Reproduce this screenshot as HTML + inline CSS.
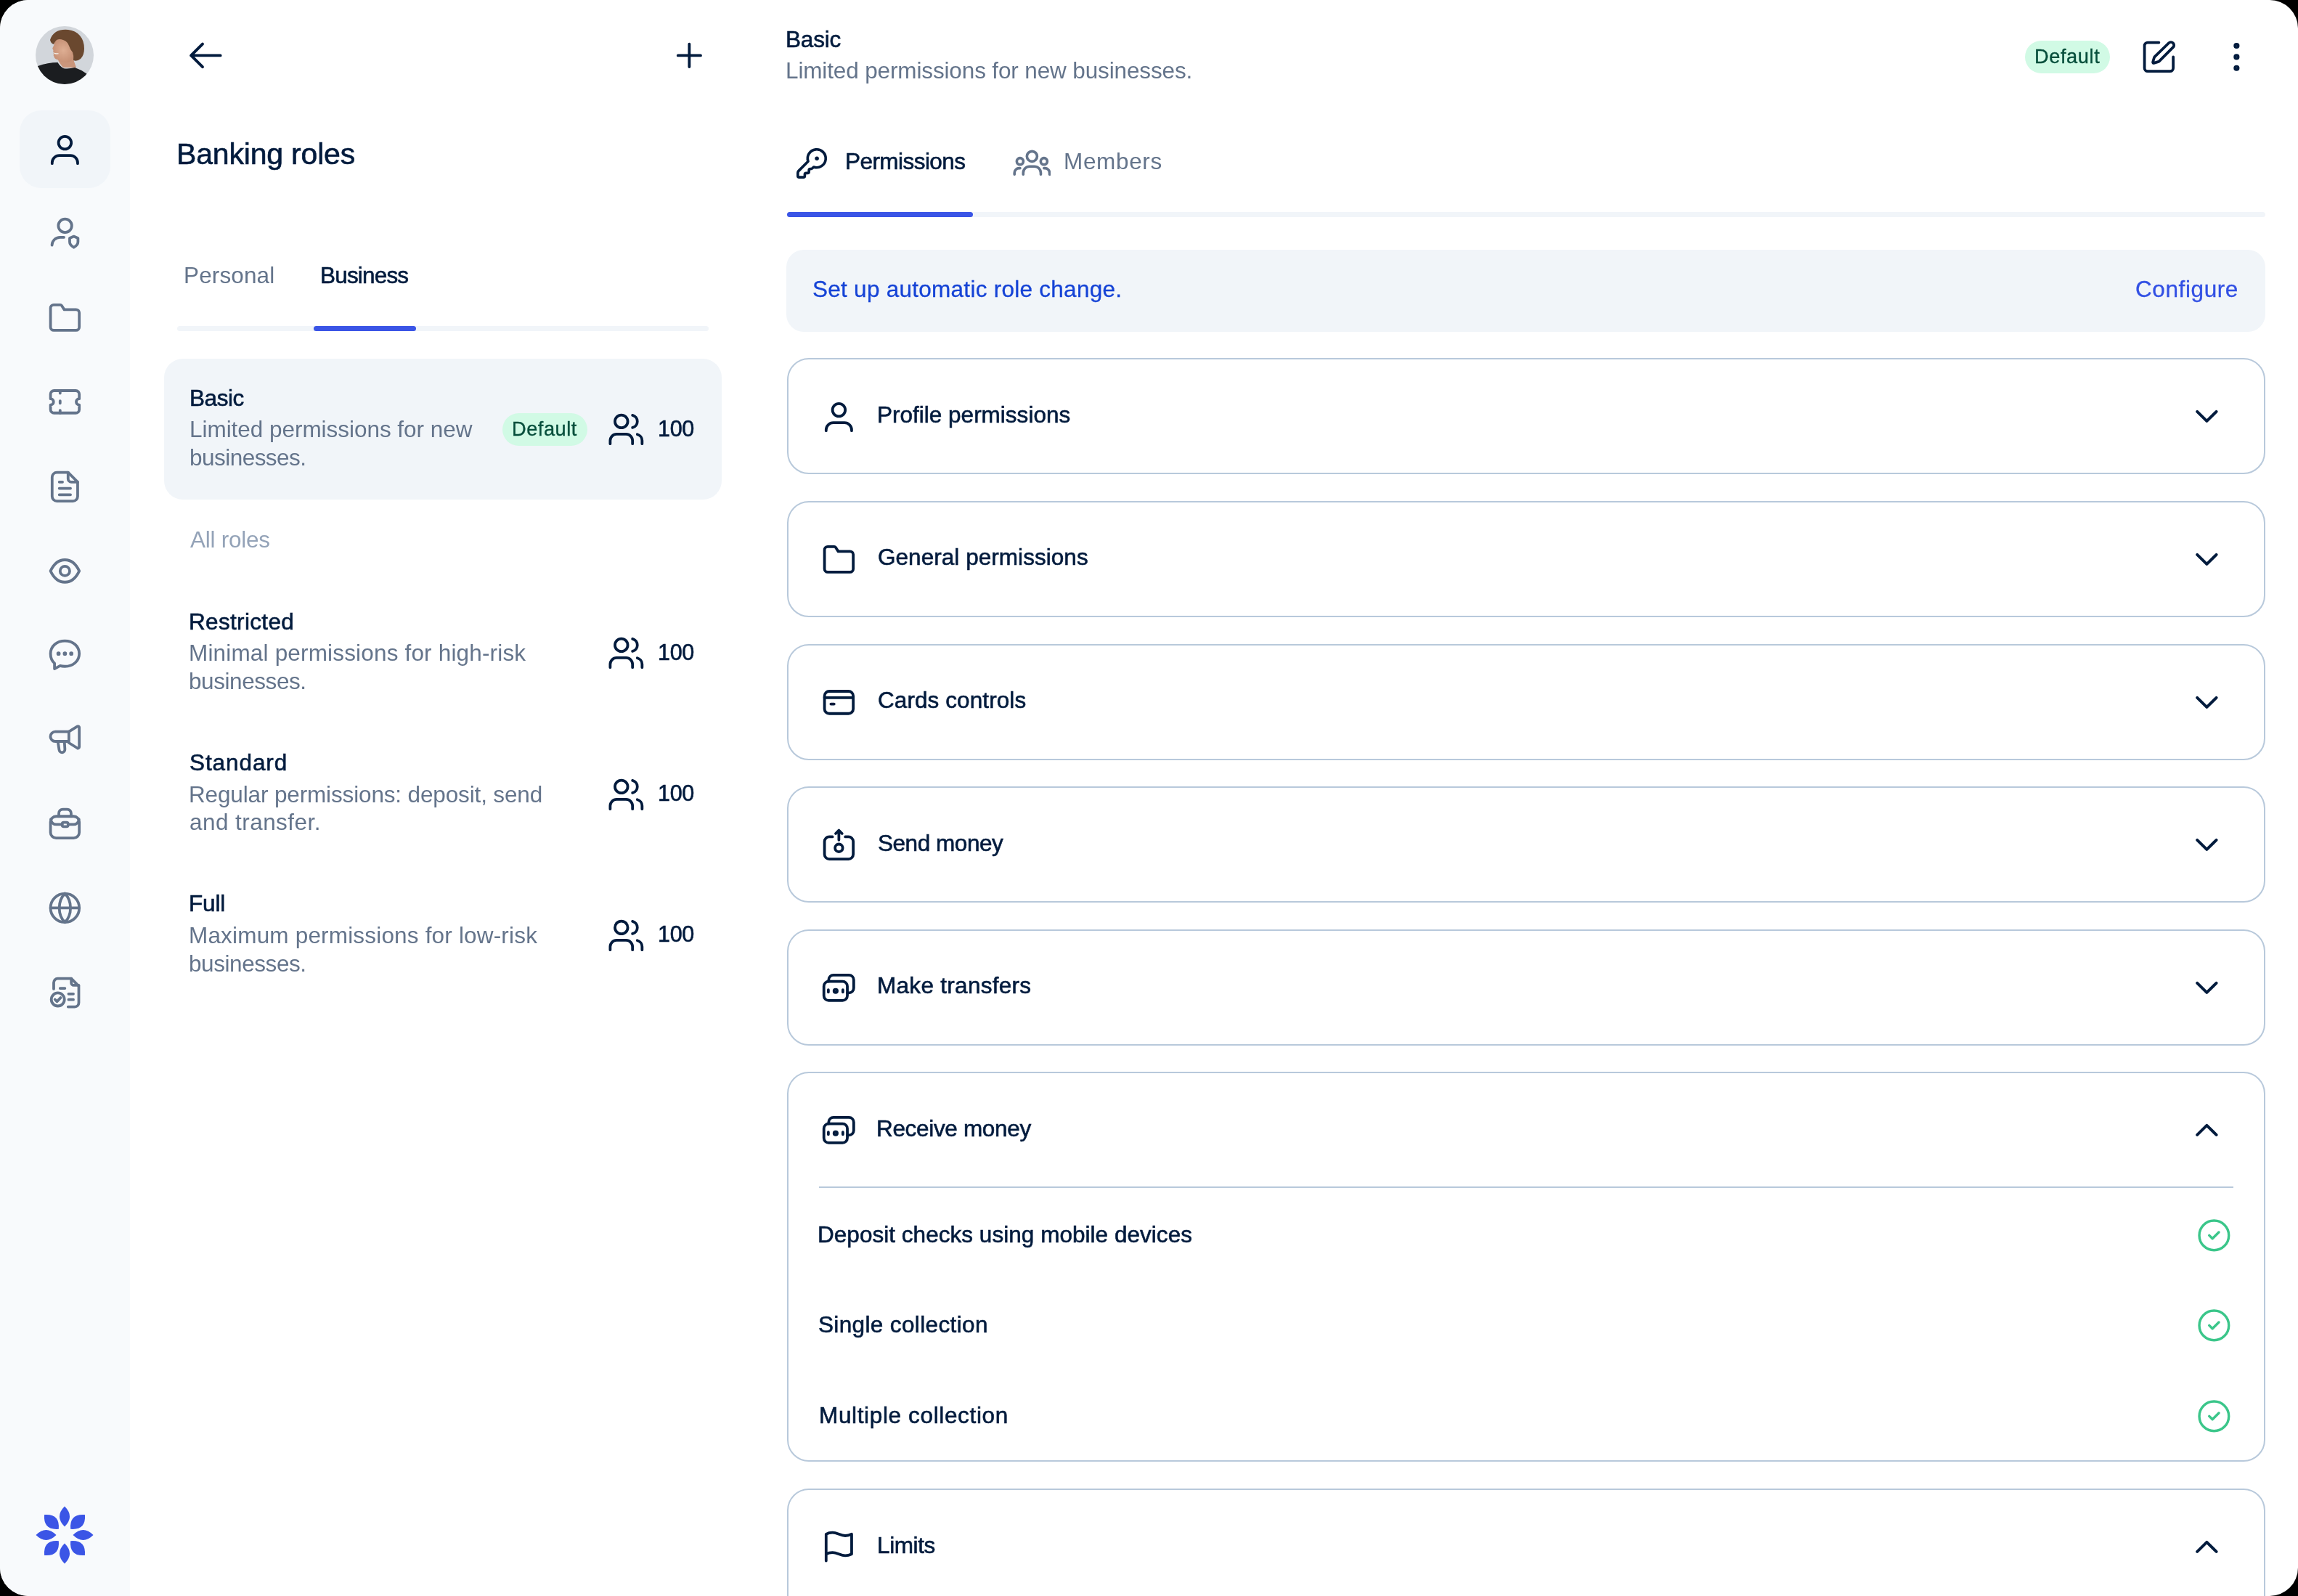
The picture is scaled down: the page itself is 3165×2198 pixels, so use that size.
<!DOCTYPE html>
<html><head><meta charset="utf-8"><style>
html,body{margin:0;padding:0;background:#000;}
body{width:3165px;height:2198px;overflow:hidden;position:relative;}
#app{position:absolute;left:0;top:0;width:3165px;height:2198px;background:#fff;border-radius:39px;overflow:hidden;font-family:"Liberation Sans",sans-serif;}
.t{position:absolute;white-space:nowrap;line-height:1;will-change:transform;}
.med{-webkit-text-stroke:0.6px currentColor;}
svg{display:block;}
</style></head><body><div id="app">
<div style="position:absolute;left:0.0px;top:0.0px;width:179.0px;height:2198.0px;background:#f8fafc;"></div>
<svg style="position:absolute;left:49.2px;top:35.9px" width="80" height="80" viewBox="0 0 80 80">
<defs><clipPath id="av"><circle cx="40" cy="40" r="40"/></clipPath>
<radialGradient id="sk" cx="0.5" cy="0.5" r="0.6"><stop offset="0" stop-color="#deae93"/><stop offset="1" stop-color="#c28b70"/></radialGradient></defs>
<g clip-path="url(#av)">
<rect width="80" height="80" fill="#d2d6db"/>
<path d="M30 44 Q33 52 38 57 L56 57 Q52 48 51 38 Z" fill="#c9957b"/>
<path d="M28 18 Q40 14 50 22 Q55 32 53 42 Q51 48 44 50 Q36 50 30 46 Q26 45 25.5 42 Q24 40 25 38.5 Q24 37.5 25 36.5 Q23.5 35 24.5 33 Q22.5 31 23.5 30 Q26 26 26 22 Z" fill="url(#sk)"/>
<path d="M25.5 37.2 Q28.5 38.4 31.5 37.6" stroke="#f2ebe4" stroke-width="1.5" fill="none"/>
<path d="M20 19 Q22 12 28 8 Q35 4 45 5 Q55 6 61 13 Q67 20 67 31 Q67 40 62 45 Q57 49 52 47 Q53 41 51 36 Q48 33 46 27 Q44 21 38 19 Q33 17 29 19 Q26 22 25 25 Q21 24 20 19 Z" fill="#6a482f"/>
<path d="M3 55 Q17 50 30.5 50 Q34 56 39 58.3 Q47 59 54 57 Q63 60 71 66 L80 80 L0 80 Z" fill="#1b1d20"/>
</g></svg>
<div style="position:absolute;left:27.0px;top:151.7px;width:125.0px;height:107.6px;background:#f1f5f9;border-radius:30px;"></div>
<svg style="position:absolute;left:62.83px;top:178.93px" width="52.75" height="52.75" viewBox="0 0 24 24" fill="none" stroke="#021b3d" stroke-width="1.72" stroke-linecap="round" stroke-linejoin="round"><circle cx="12" cy="8" r="4"/><path d="M4 21v-.5A4.5 4.5 0 0 1 8.5 16h7a4.5 4.5 0 0 1 4.5 4.5v.5"/></svg>
<svg style="position:absolute;left:62.83px;top:295.08px" width="52.75" height="52.75" viewBox="0 0 24 24" fill="none" stroke="#64748b" stroke-width="1.72" stroke-linecap="round" stroke-linejoin="round"><circle cx="12.1" cy="7.2" r="4.2"/><path d="M3.9 19.4A5 5 0 0 1 8.9 14.5h2.5"/><path d="M17.6 13.9l2.6 1.1v2.4c0 1.4-1.1 2.5-2.6 3.4-1.5-.9-2.6-2-2.6-3.4V15z"/></svg>
<svg style="position:absolute;left:62.83px;top:411.23px" width="52.75" height="52.75" viewBox="0 0 24 24" fill="none" stroke="#64748b" stroke-width="1.72" stroke-linecap="round" stroke-linejoin="round"><path d="M3 18V6a2 2 0 0 1 2-2h4.1a1 1 0 0 1 .85.47L11.6 7H19a2 2 0 0 1 2 2v9a2 2 0 0 1-2 2H5a2 2 0 0 1-2-2z"/></svg>
<svg style="position:absolute;left:62.83px;top:527.38px" width="52.75" height="52.75" viewBox="0 0 24 24" fill="none" stroke="#64748b" stroke-width="1.72" stroke-linecap="round" stroke-linejoin="round"><path d="M3 7.2a2.2 2.2 0 0 1 2.2-2.2h13.6a2.2 2.2 0 0 1 2.2 2.2v2.9a1.9 1.9 0 0 0 0 3.8v2.9a2.2 2.2 0 0 1-2.2 2.2H5.2A2.2 2.2 0 0 1 3 16.8v-2.9a1.9 1.9 0 0 0 0-3.8z"/><path d="M9 5v1.6M9 11.4v1.5M9 17.3V19"/></svg>
<svg style="position:absolute;left:62.83px;top:643.53px" width="52.75" height="52.75" viewBox="0 0 24 24" fill="none" stroke="#64748b" stroke-width="1.72" stroke-linecap="round" stroke-linejoin="round"><path d="M14 3H7a3 3 0 0 0-3 3v12a3 3 0 0 0 3 3h10a3 3 0 0 0 3-3V9z"/><path d="M14 3v4a2 2 0 0 0 2 2h4"/><path d="M8.5 9h2M8.5 13h7M8.5 17h7"/></svg>
<svg style="position:absolute;left:62.83px;top:759.67px" width="52.75" height="52.75" viewBox="0 0 24 24" fill="none" stroke="#64748b" stroke-width="1.72" stroke-linecap="round" stroke-linejoin="round"><path d="M3 12c2-4.3 5-7 9-7s7 2.7 9 7c-2 4.3-5 7-9 7s-7-2.7-9-7z"/><circle cx="12" cy="12" r="3"/></svg>
<svg style="position:absolute;left:62.83px;top:875.83px" width="52.75" height="52.75" viewBox="0 0 24 24" fill="none" stroke="#64748b" stroke-width="1.72" stroke-linecap="round" stroke-linejoin="round"><path d="M12 3c5 0 9 3.3 9 8s-4 8-9 8c-1 0-2-.1-3-.4L5.5 20.5V17C3.9 15.6 3 13.4 3 11c0-4.7 4-8 9-8z"/><path d="M8 11h.01M12 11h.01M16 11h.01" stroke-width="2.6"/></svg>
<svg style="position:absolute;left:62.83px;top:991.98px" width="52.75" height="52.75" viewBox="0 0 24 24" fill="none" stroke="#64748b" stroke-width="1.72" stroke-linecap="round" stroke-linejoin="round"><path d="M14.5 7.1H6a3 3 0 0 0 0 6.1h8.5z"/><path d="M14.5 7.1l5.3-3.3a.8.8 0 0 1 1.2.7v12.2a.8.8 0 0 1-1.2.7l-5.3-3.3"/><path d="M7.6 13.3l.8 5.2a1.8 1.8 0 0 0 3.6-.3l-.3-4.9"/></svg>
<svg style="position:absolute;left:62.83px;top:1108.12px" width="52.75" height="52.75" viewBox="0 0 24 24" fill="none" stroke="#64748b" stroke-width="1.72" stroke-linecap="round" stroke-linejoin="round"><rect x="3" y="7.4" width="18" height="13.6" rx="3.5"/><path d="M8.2 7.4V5.5A2.5 2.5 0 0 1 10.7 3h2.7a2.5 2.5 0 0 1 2.5 2.5v1.9"/><path d="M3.2 9.2a3.3 3.3 0 0 0 3.3 3.3h3.8M14 12.5h3.5a3.3 3.3 0 0 0 3.3-3.3"/><rect x="10.3" y="11.2" width="3.7" height="2.6" rx="1"/></svg>
<svg style="position:absolute;left:62.83px;top:1224.28px" width="52.75" height="52.75" viewBox="0 0 24 24" fill="none" stroke="#64748b" stroke-width="1.72" stroke-linecap="round" stroke-linejoin="round"><circle cx="12" cy="12" r="9"/><path d="M3 12h18"/><path d="M12 3c2.5 2.5 3.5 5.5 3.5 9s-1 6.5-3.5 9c-2.5-2.5-3.5-5.5-3.5-9s1-6.5 3.5-9z"/></svg>
<svg style="position:absolute;left:62.83px;top:1340.42px" width="52.75" height="52.75" viewBox="0 0 24 24" fill="none" stroke="#64748b" stroke-width="1.72" stroke-linecap="round" stroke-linejoin="round"><path d="M5 10V6a2.5 2.5 0 0 1 2.5-2.5H16l4.7 4.7v10.5a2.5 2.5 0 0 1-2.5 2.5H14"/><path d="M16 3.5v2.7a1.5 1.5 0 0 0 1.5 1.5h3.2"/><path d="M9 9.6h3M14.3 13.1h3M14.3 16.7h3"/><circle cx="7.6" cy="16.6" r="4.1"/><path d="M5.8 16.6l1.2 1.3 2.3-2.4"/></svg>
<svg style="position:absolute;left:49.3px;top:2073.5px" width="80" height="80" viewBox="0 0 80 80" fill="#3b55e6"><path transform="rotate(0 40 40)" d="M40 28.5 Q54 14.5 40 0.5 Q26 14.5 40 28.5Z"/><path transform="rotate(45 40 40)" d="M40 28.5 Q56.5 14.5 40 0.5 Q23.5 14.5 40 28.5Z"/><path transform="rotate(90 40 40)" d="M40 28.5 Q54 14.5 40 0.5 Q26 14.5 40 28.5Z"/><path transform="rotate(135 40 40)" d="M40 28.5 Q56.5 14.5 40 0.5 Q23.5 14.5 40 28.5Z"/><path transform="rotate(180 40 40)" d="M40 28.5 Q54 14.5 40 0.5 Q26 14.5 40 28.5Z"/><path transform="rotate(225 40 40)" d="M40 28.5 Q56.5 14.5 40 0.5 Q23.5 14.5 40 28.5Z"/><path transform="rotate(270 40 40)" d="M40 28.5 Q54 14.5 40 0.5 Q26 14.5 40 28.5Z"/><path transform="rotate(315 40 40)" d="M40 28.5 Q56.5 14.5 40 0.5 Q23.5 14.5 40 28.5Z"/></svg>
<svg style="position:absolute;left:257.32px;top:49.53px" width="52.75" height="52.75" viewBox="0 0 24 24" fill="none" stroke="#021b3d" stroke-width="1.8" stroke-linecap="round" stroke-linejoin="round"><path d="M2.8 12H21.2M10 4.8L2.8 12l7.2 7.2"/></svg>
<svg style="position:absolute;left:922.92px;top:49.53px" width="52.75" height="52.75" viewBox="0 0 24 24" fill="none" stroke="#021b3d" stroke-width="1.75" stroke-linecap="round" stroke-linejoin="round"><path d="M12 4.9v14.2M4.9 12h14.2"/></svg>
<div style="position:absolute;left:243.6px;top:449.2px;width:732.4px;height:6.8px;background:#f1f5f9;border-radius:4px;"></div>
<div style="position:absolute;left:432.0px;top:449.2px;width:140.6px;height:6.8px;background:#3b55e6;border-radius:4px;"></div>
<div style="position:absolute;left:225.7px;top:494.0px;width:768.3px;height:194.0px;background:#f1f5f9;border-radius:26px;"></div>
<div style="position:absolute;left:692.1px;top:568.8px;width:116.8px;height:44.9px;background:#d1fae5;border-radius:23px;"></div>
<svg style="position:absolute;left:836.00px;top:565.40px" width="52.75" height="52.75" viewBox="0 0 24 24" fill="none" stroke="#021b3d" stroke-width="1.72" stroke-linecap="round" stroke-linejoin="round"><path d="M16 21v-2a4 4 0 0 0-4-4H6a4 4 0 0 0-4 4v2"/><circle cx="9" cy="7" r="4"/><path d="M22 21v-2a4 4 0 0 0-3-3.87"/><path d="M16 3.13a4 4 0 0 1 0 7.75"/></svg>
<svg style="position:absolute;left:836.00px;top:873.30px" width="52.75" height="52.75" viewBox="0 0 24 24" fill="none" stroke="#021b3d" stroke-width="1.72" stroke-linecap="round" stroke-linejoin="round"><path d="M16 21v-2a4 4 0 0 0-4-4H6a4 4 0 0 0-4 4v2"/><circle cx="9" cy="7" r="4"/><path d="M22 21v-2a4 4 0 0 0-3-3.87"/><path d="M16 3.13a4 4 0 0 1 0 7.75"/></svg>
<svg style="position:absolute;left:836.00px;top:1067.60px" width="52.75" height="52.75" viewBox="0 0 24 24" fill="none" stroke="#021b3d" stroke-width="1.72" stroke-linecap="round" stroke-linejoin="round"><path d="M16 21v-2a4 4 0 0 0-4-4H6a4 4 0 0 0-4 4v2"/><circle cx="9" cy="7" r="4"/><path d="M22 21v-2a4 4 0 0 0-3-3.87"/><path d="M16 3.13a4 4 0 0 1 0 7.75"/></svg>
<svg style="position:absolute;left:836.00px;top:1261.60px" width="52.75" height="52.75" viewBox="0 0 24 24" fill="none" stroke="#021b3d" stroke-width="1.72" stroke-linecap="round" stroke-linejoin="round"><path d="M16 21v-2a4 4 0 0 0-4-4H6a4 4 0 0 0-4 4v2"/><circle cx="9" cy="7" r="4"/><path d="M22 21v-2a4 4 0 0 0-3-3.87"/><path d="M16 3.13a4 4 0 0 1 0 7.75"/></svg>
<div style="position:absolute;left:2789.0px;top:55.6px;width:117.0px;height:45.0px;background:#d1fae5;border-radius:23px;"></div>
<svg style="position:absolute;left:2946.62px;top:51.53px" width="52.75" height="52.75" viewBox="0 0 24 24" fill="none" stroke="#021b3d" stroke-width="1.72" stroke-linecap="round" stroke-linejoin="round"><path d="M12 3H5a2 2 0 0 0-2 2v14a2 2 0 0 0 2 2h14a2 2 0 0 0 2-2v-7"/><path d="M18.2 3.3a1.9 1.9 0 0 1 2.7 2.7l-8.6 8.6a2 2 0 0 1-.85.5l-2.6.75a.5.5 0 0 1-.6-.6l.75-2.6a2 2 0 0 1 .5-.85z"/></svg>
<svg style="position:absolute;left:3053.62px;top:51.62px" width="52.75" height="52.75" viewBox="0 0 24 24" fill="none" stroke="#021b3d" stroke-width="1.72" stroke-linecap="round" stroke-linejoin="round"><circle cx="12" cy="5" r="1"/><circle cx="12" cy="12" r="1"/><circle cx="12" cy="19" r="1"/></svg>
<svg style="position:absolute;left:1094.94px;top:202.06px" width="46" height="46" viewBox="0 0 24 24" fill="none" stroke="#021b3d" stroke-width="1.9" stroke-linecap="round" stroke-linejoin="round"><path d="M2.586 17.414A2 2 0 0 0 2 18.828V21a1 1 0 0 0 1 1h3a1 1 0 0 0 1-1v-1a1 1 0 0 1 1-1h1a1 1 0 0 0 1-1v-1a1 1 0 0 1 1-1h.172a2 2 0 0 0 1.414-.586l.814-.814a6.5 6.5 0 1 0-4-4z"/><circle cx="15.7" cy="8.5" r="1.45" fill="#021b3d" stroke="none"/></svg>
<svg style="position:absolute;left:1394.62px;top:198.12px" width="52.75" height="52.75" viewBox="0 0 24 24" fill="none" stroke="#64748b" stroke-width="1.65" stroke-linecap="round" stroke-linejoin="round"><circle cx="12" cy="7.9" r="3.2"/><circle cx="4.5" cy="11" r="2.05"/><circle cx="19.5" cy="11" r="2.05"/><path d="M6.5 19.2V18.2a4 4 0 0 1 4-4h3a4 4 0 0 1 4 4v1"/><path d="M4.5 15.3H4A3 3 0 0 0 1 18.3v.9"/><path d="M19.5 15.3h.5A3 3 0 0 1 23 18.3v.9"/></svg>
<div style="position:absolute;left:1084.0px;top:292.4px;width:2036.0px;height:7.0px;background:#f1f5f9;border-radius:4px;"></div>
<div style="position:absolute;left:1084.0px;top:292.4px;width:256.0px;height:7.0px;background:#3b55e6;border-radius:4px;"></div>
<div style="position:absolute;left:1083.0px;top:343.5px;width:2037.0px;height:113.5px;background:#f1f5f9;border-radius:24px;"></div>
<div style="position:absolute;left:1083.5px;top:493.1px;width:2036.5px;height:160.0px;box-sizing:border-box;border:2.2px solid #b8c9db;border-radius:30px;background:#fff;"></div>
<svg style="position:absolute;left:1128.62px;top:546.73px" width="52.75" height="52.75" viewBox="0 0 24 24" fill="none" stroke="#021b3d" stroke-width="1.72" stroke-linecap="round" stroke-linejoin="round"><circle cx="12" cy="8" r="4"/><path d="M4 21v-.5A4.5 4.5 0 0 1 8.5 16h7a4.5 4.5 0 0 1 4.5 4.5v.5"/></svg>
<svg style="position:absolute;left:3013.03px;top:546.73px" width="52.75" height="52.75" viewBox="0 0 24 24" fill="none" stroke="#021b3d" stroke-width="1.8" stroke-linecap="round" stroke-linejoin="round"><path d="M6 9l6 6 6-6"/></svg>
<div style="position:absolute;left:1083.5px;top:690.0px;width:2036.5px;height:160.0px;box-sizing:border-box;border:2.2px solid #b8c9db;border-radius:30px;background:#fff;"></div>
<svg style="position:absolute;left:1128.62px;top:743.62px" width="52.75" height="52.75" viewBox="0 0 24 24" fill="none" stroke="#021b3d" stroke-width="1.72" stroke-linecap="round" stroke-linejoin="round"><path d="M3 18V6a2 2 0 0 1 2-2h4.1a1 1 0 0 1 .85.47L11.6 7H19a2 2 0 0 1 2 2v9a2 2 0 0 1-2 2H5a2 2 0 0 1-2-2z"/></svg>
<svg style="position:absolute;left:3013.03px;top:743.62px" width="52.75" height="52.75" viewBox="0 0 24 24" fill="none" stroke="#021b3d" stroke-width="1.8" stroke-linecap="round" stroke-linejoin="round"><path d="M6 9l6 6 6-6"/></svg>
<div style="position:absolute;left:1083.5px;top:887.0px;width:2036.5px;height:160.0px;box-sizing:border-box;border:2.2px solid #b8c9db;border-radius:30px;background:#fff;"></div>
<svg style="position:absolute;left:1128.62px;top:940.62px" width="52.75" height="52.75" viewBox="0 0 24 24" fill="none" stroke="#021b3d" stroke-width="1.72" stroke-linecap="round" stroke-linejoin="round"><rect x="3" y="5" width="18" height="14" rx="3"/><path d="M3 9h18M7 13h2"/></svg>
<svg style="position:absolute;left:3013.03px;top:940.62px" width="52.75" height="52.75" viewBox="0 0 24 24" fill="none" stroke="#021b3d" stroke-width="1.8" stroke-linecap="round" stroke-linejoin="round"><path d="M6 9l6 6 6-6"/></svg>
<div style="position:absolute;left:1083.5px;top:1083.1px;width:2036.5px;height:160.0px;box-sizing:border-box;border:2.2px solid #b8c9db;border-radius:30px;background:#fff;"></div>
<svg style="position:absolute;left:1128.62px;top:1136.72px" width="52.75" height="52.75" viewBox="0 0 24 24" fill="none" stroke="#021b3d" stroke-width="1.72" stroke-linecap="round" stroke-linejoin="round"><path d="M8 7H6a3 3 0 0 0-3 3v8a3 3 0 0 0 3 3h12a3 3 0 0 0 3-3v-8a3 3 0 0 0-3-3h-2"/><path d="M12 3v6M10 5l2-2 2 2"/><circle cx="12" cy="14" r="2.4"/></svg>
<svg style="position:absolute;left:3013.03px;top:1136.72px" width="52.75" height="52.75" viewBox="0 0 24 24" fill="none" stroke="#021b3d" stroke-width="1.8" stroke-linecap="round" stroke-linejoin="round"><path d="M6 9l6 6 6-6"/></svg>
<div style="position:absolute;left:1083.5px;top:1279.9px;width:2036.5px;height:160.0px;box-sizing:border-box;border:2.2px solid #b8c9db;border-radius:30px;background:#fff;"></div>
<svg style="position:absolute;left:1128.62px;top:1333.53px" width="52.75" height="52.75" viewBox="0 0 24 24" fill="none" stroke="#021b3d" stroke-width="1.72" stroke-linecap="round" stroke-linejoin="round"><path d="M5.6 8V7a3 3 0 0 1 3-3h9.7a3 3 0 0 1 3 3v5.2a3 3 0 0 1-3 3h-1"/><rect x="2.6" y="8" width="14.7" height="12" rx="3"/><circle cx="9.95" cy="14" r="1"/><path d="M5.4 13.3v1.4M14.5 13.3v1.4"/></svg>
<svg style="position:absolute;left:3013.03px;top:1333.53px" width="52.75" height="52.75" viewBox="0 0 24 24" fill="none" stroke="#021b3d" stroke-width="1.8" stroke-linecap="round" stroke-linejoin="round"><path d="M6 9l6 6 6-6"/></svg>
<div style="position:absolute;left:1083.5px;top:1476.2px;width:2036.5px;height:537.0px;box-sizing:border-box;border:2.2px solid #b8c9db;border-radius:30px;background:#fff;"></div>
<svg style="position:absolute;left:1128.62px;top:1529.83px" width="52.75" height="52.75" viewBox="0 0 24 24" fill="none" stroke="#021b3d" stroke-width="1.72" stroke-linecap="round" stroke-linejoin="round"><path d="M5.6 8V7a3 3 0 0 1 3-3h9.7a3 3 0 0 1 3 3v5.2a3 3 0 0 1-3 3h-1"/><rect x="2.6" y="8" width="14.7" height="12" rx="3"/><circle cx="9.95" cy="14" r="1"/><path d="M5.4 13.3v1.4M14.5 13.3v1.4"/></svg>
<svg style="position:absolute;left:3013.03px;top:1529.83px" width="52.75" height="52.75" viewBox="0 0 24 24" fill="none" stroke="#021b3d" stroke-width="1.8" stroke-linecap="round" stroke-linejoin="round"><path d="M6 15l6-6 6 6"/></svg>
<div style="position:absolute;left:1127.7px;top:1634.3px;width:1948.6px;height:2.2px;background:#b8c9db;"></div>
<svg style="position:absolute;left:3022.53px;top:1675.02px" width="52.75" height="52.75" viewBox="0 0 24 24" fill="none" stroke="#3bc68a" stroke-width="1.55" stroke-linecap="round" stroke-linejoin="round"><circle cx="12" cy="12" r="9.25"/><path d="M9 12l2 2 4-4"/></svg>
<svg style="position:absolute;left:3022.53px;top:1799.42px" width="52.75" height="52.75" viewBox="0 0 24 24" fill="none" stroke="#3bc68a" stroke-width="1.55" stroke-linecap="round" stroke-linejoin="round"><circle cx="12" cy="12" r="9.25"/><path d="M9 12l2 2 4-4"/></svg>
<svg style="position:absolute;left:3022.53px;top:1924.12px" width="52.75" height="52.75" viewBox="0 0 24 24" fill="none" stroke="#3bc68a" stroke-width="1.55" stroke-linecap="round" stroke-linejoin="round"><circle cx="12" cy="12" r="9.25"/><path d="M9 12l2 2 4-4"/></svg>
<div style="position:absolute;left:1083.5px;top:2050.2px;width:2036.5px;height:400.0px;box-sizing:border-box;border:2.2px solid #b8c9db;border-radius:30px;background:#fff;"></div>
<svg style="position:absolute;left:1128.62px;top:2103.82px" width="52.75" height="52.75" viewBox="0 0 24 24" fill="none" stroke="#021b3d" stroke-width="1.72" stroke-linecap="round" stroke-linejoin="round"><path d="M4 20.7V4c1-.6 2-1 4-1 3 0 5 2 8 2 2 0 3-.5 4-1v12.5c-1 .5-2 1-4 1-3 0-5-2-8-2-2 0-3 .4-4 1"/></svg>
<svg style="position:absolute;left:3013.03px;top:2103.82px" width="52.75" height="52.75" viewBox="0 0 24 24" fill="none" stroke="#021b3d" stroke-width="1.8" stroke-linecap="round" stroke-linejoin="round"><path d="M6 15l6-6 6 6"/></svg>
<div class="t" style="left:243.20px;top:191.88px;font-size:41px;letter-spacing:-0.183px;color:#021b3d;-webkit-text-stroke:0.6px #021b3d;">Banking roles</div>
<div class="t" style="left:252.70px;top:363.93px;font-size:31.5px;letter-spacing:0.129px;color:#64748b;">Personal</div>
<div class="t" style="left:440.70px;top:363.93px;font-size:31.5px;letter-spacing:-0.815px;color:#021b3d;-webkit-text-stroke:0.6px #021b3d;">Business</div>
<div class="t" style="left:261.30px;top:533.13px;font-size:31.5px;letter-spacing:-0.425px;color:#021b3d;-webkit-text-stroke:0.6px #021b3d;">Basic</div>
<div class="t" style="left:261.00px;top:575.73px;font-size:31.5px;letter-spacing:-0.038px;color:#64748b;">Limited permissions for new</div>
<div class="t" style="left:261.00px;top:614.93px;font-size:31.5px;letter-spacing:-0.530px;color:#64748b;">businesses.</div>
<div class="t" style="left:262.00px;top:728.33px;font-size:31.5px;letter-spacing:-0.250px;color:#94a3b8;">All roles</div>
<div class="t" style="left:260.20px;top:841.03px;font-size:31.5px;letter-spacing:0.333px;color:#021b3d;-webkit-text-stroke:0.6px #021b3d;">Restricted</div>
<div class="t" style="left:260.00px;top:883.73px;font-size:31.5px;letter-spacing:0.172px;color:#64748b;">Minimal permissions for high-risk</div>
<div class="t" style="left:260.00px;top:922.73px;font-size:31.5px;letter-spacing:-0.430px;color:#64748b;">businesses.</div>
<div class="t" style="left:261.00px;top:1035.33px;font-size:31.5px;letter-spacing:0.913px;color:#021b3d;-webkit-text-stroke:0.6px #021b3d;">Standard</div>
<div class="t" style="left:260.00px;top:1078.73px;font-size:31.5px;letter-spacing:-0.145px;color:#64748b;">Regular permissions: deposit, send</div>
<div class="t" style="left:261.00px;top:1116.93px;font-size:31.5px;letter-spacing:0.441px;color:#64748b;">and transfer.</div>
<div class="t" style="left:260.00px;top:1229.33px;font-size:31.5px;letter-spacing:-0.167px;color:#021b3d;-webkit-text-stroke:0.6px #021b3d;">Full</div>
<div class="t" style="left:260.00px;top:1272.63px;font-size:31.5px;letter-spacing:0.180px;color:#64748b;">Maximum permissions for low-risk</div>
<div class="t" style="left:260.00px;top:1311.63px;font-size:31.5px;letter-spacing:-0.430px;color:#64748b;">businesses.</div>
<div class="t" style="left:906.20px;top:574.67px;font-size:30.5px;letter-spacing:-0.300px;color:#021b3d;-webkit-text-stroke:0.6px #021b3d;">100</div>
<div class="t" style="left:906.20px;top:882.57px;font-size:30.5px;letter-spacing:-0.300px;color:#021b3d;-webkit-text-stroke:0.6px #021b3d;">100</div>
<div class="t" style="left:906.20px;top:1076.87px;font-size:30.5px;letter-spacing:-0.300px;color:#021b3d;-webkit-text-stroke:0.6px #021b3d;">100</div>
<div class="t" style="left:906.20px;top:1270.87px;font-size:30.5px;letter-spacing:-0.300px;color:#021b3d;-webkit-text-stroke:0.6px #021b3d;">100</div>
<div class="t" style="left:705.30px;top:577.17px;font-size:27.2px;letter-spacing:0.534px;color:#064e3b;-webkit-text-stroke:0.35px #064e3b;">Default</div>
<div class="t" style="left:1082.40px;top:39.33px;font-size:31.5px;letter-spacing:-0.175px;color:#021b3d;-webkit-text-stroke:0.6px #021b3d;">Basic</div>
<div class="t" style="left:1082.00px;top:81.93px;font-size:31.5px;letter-spacing:-0.137px;color:#64748b;">Limited permissions for new businesses.</div>
<div class="t" style="left:2801.60px;top:64.37px;font-size:27.2px;letter-spacing:0.600px;color:#064e3b;-webkit-text-stroke:0.35px #064e3b;">Default</div>
<div class="t" style="left:1163.50px;top:207.33px;font-size:31.5px;letter-spacing:-0.550px;color:#021b3d;-webkit-text-stroke:0.6px #021b3d;">Permissions</div>
<div class="t" style="left:1465.00px;top:207.33px;font-size:31.5px;letter-spacing:0.667px;color:#64748b;">Members</div>
<div class="t" style="left:1119.00px;top:383.33px;font-size:31.5px;letter-spacing:0.268px;color:#1543d6;-webkit-text-stroke:0.3px #1543d6;">Set up automatic role change.</div>
<div class="t" style="left:2941.00px;top:383.33px;font-size:31.5px;letter-spacing:0.600px;color:#3250e4;-webkit-text-stroke:0.3px #3250e4;">Configure</div>
<div class="t" style="left:1207.60px;top:555.73px;font-size:31.5px;letter-spacing:0.005px;color:#021b3d;-webkit-text-stroke:0.6px #021b3d;">Profile permissions</div>
<div class="t" style="left:1208.70px;top:752.33px;font-size:31.5px;letter-spacing:0.044px;color:#021b3d;-webkit-text-stroke:0.6px #021b3d;">General permissions</div>
<div class="t" style="left:1208.70px;top:949.13px;font-size:31.5px;letter-spacing:0.085px;color:#021b3d;-webkit-text-stroke:0.6px #021b3d;">Cards controls</div>
<div class="t" style="left:1208.70px;top:1145.63px;font-size:31.5px;letter-spacing:-0.456px;color:#021b3d;-webkit-text-stroke:0.6px #021b3d;">Send money</div>
<div class="t" style="left:1208.40px;top:1342.33px;font-size:31.5px;letter-spacing:0.292px;color:#021b3d;-webkit-text-stroke:0.6px #021b3d;">Make transfers</div>
<div class="t" style="left:1207.00px;top:1539.33px;font-size:31.5px;letter-spacing:-0.325px;color:#021b3d;-webkit-text-stroke:0.6px #021b3d;">Receive money</div>
<div class="t" style="left:1126.40px;top:1684.93px;font-size:31.5px;letter-spacing:0.035px;color:#021b3d;-webkit-text-stroke:0.6px #021b3d;">Deposit checks using mobile devices</div>
<div class="t" style="left:1127.40px;top:1809.33px;font-size:31.5px;letter-spacing:0.362px;color:#021b3d;-webkit-text-stroke:0.6px #021b3d;">Single collection</div>
<div class="t" style="left:1127.80px;top:1934.03px;font-size:31.5px;letter-spacing:0.645px;color:#021b3d;-webkit-text-stroke:0.6px #021b3d;">Multiple collection</div>
<div class="t" style="left:1208.40px;top:2112.63px;font-size:31.5px;letter-spacing:-0.380px;color:#021b3d;-webkit-text-stroke:0.6px #021b3d;">Limits</div>
</div></body></html>
